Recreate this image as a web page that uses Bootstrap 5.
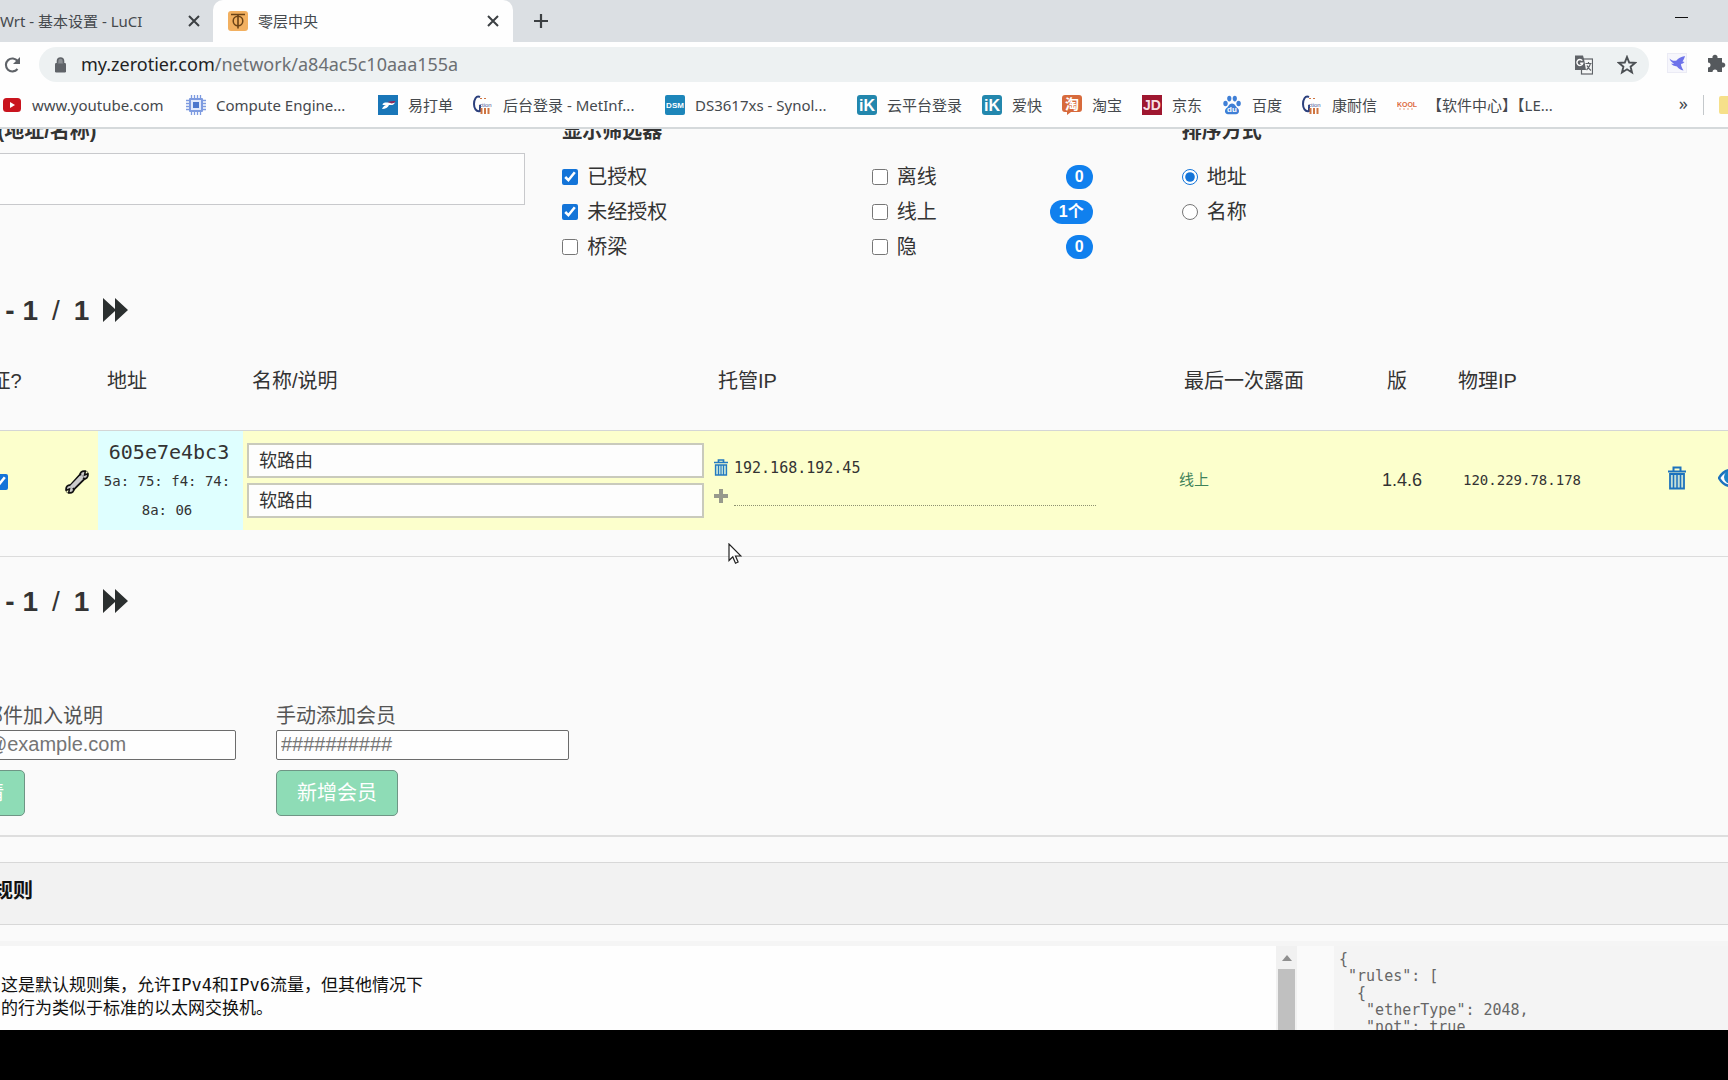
<!DOCTYPE html>
<html lang="zh-CN">
<head>
<meta charset="utf-8">
<meta name="viewport" content="width=device-width, initial-scale=1">
<title>零层中央</title>
<link rel="stylesheet" href="https://cdn.jsdelivr.net/npm/bootstrap@5.3.0/dist/css/bootstrap.min.css">
<style>
  body { font-family: "Liberation Sans", "Noto Sans CJK SC", sans-serif; font-size: 20px; line-height: 28px; color: #333; background: #fafafa; }
  button { color: inherit; }
  svg { display: block; flex: none; }
  .plain-btn { border: 0; background: none; padding: 0; }

  /* browser frame */
  .chrome-ui { font-family: "Noto Sans", "Noto Sans CJK SC", sans-serif; font-size: 15px; line-height: 20px; color: #45494d; background: #fefefe; border-bottom: 2px solid #d5d9db; }
  .tab-strip { height: 42px; background: #dbdfe3; }
  .tab-back { width: 213px; padding-right: 12px; }
  .tab-front { width: 300px; gap: 10px; padding: 0 13px 0 15px; background: #fefefe; border-radius: 10px 10px 0 0; }
  .toolbar { height: 45px; padding-top: 5px; }
  .omnibox { height: 35px; margin-left: 17px; padding: 0 12px 0 15px; border-radius: 18px; background: #edf1f2; }
  .omnibox-text { font-size: 18px; line-height: 24px; padding: 0 0 2px 14px; color: #6b6f73; }
  .omnibox-text b { font-weight: 400; color: #222; }
  .extensions { gap: 20px; padding: 0 2px 0 18px; }
  .bookmarks { height: 40px; padding: 0 0 4px 2px; gap: 20px; }
  .bookmarks a { color: #45494d; text-decoration: none; gap: 10px; }
  .bm-long { width: 134px; }
  .bm-more { gap: 15px; margin-right: -15px; font-size: 18px; }
  .bm-rule { width: 1px; height: 20px; background: #c4c8cb; }

  /* scrolled page */
  .viewport { min-height: 0; }
  .sheet { margin: -13px -73px 0 -57px; }
  .panel-title { font-size: 20px; line-height: 30px; font-weight: 700; margin: 0; }
  .search-col { padding-right: 37px; }
  .search-label { padding-left: 9px; }
  .search-box { height: 52px; margin-top: 7px; border: 1px solid #c8c9cc; background: #fdfdfd; padding: 0 12px; }
  .filters { padding-right: 89px; }
  .choices { padding: 13px 0 1px; }
  .choice { height: 35px; gap: 9px; }
  .choice input, .tick { width: 16px; height: 16px; margin: 0; accent-color: #1374d8; }
  .count { min-width: 27px; height: 24px; padding: 0 9px; border-radius: 12px; background: #1080ee; color: #fff; font-size: 16px; font-weight: 700; line-height: 24px; text-align: center; }
  .pager { height: 40px; padding-left: 39px; font-size: 28px; line-height: 40px; font-weight: 700; }
  .pager .slash { font-weight: 400; margin: 0 14px; }
  .pager button { margin-left: 14px; }
  .pager svg { margin-top: -3px; }

  .members { width: 100%; table-layout: fixed; margin-top: 1px; }
  .members th { height: 100px; padding: 2px 9px 0; font-weight: 400; border-bottom: 1px solid #d4d6d6; white-space: nowrap; }
  .members th:first-child { padding-right: 17px; }
  .members td { height: 100px; padding: 0 5px 0 4px; background: #fcffcc; }
  .members .addr-cell { background: #dfffff; padding: 3px 3px 0 0; }
  .mono { font-family: "DejaVu Sans Mono", monospace; }
  .addr { font-size: 20px; line-height: 29px; }
  .mac { font-size: 14px; line-height: 29px; padding: 0 9px 0 5px; }
  .name-box { height: 35px; border: 2px solid #c9cabc; background: #fdfdfd; padding: 0 10px 2px; font-size: 18px; color: #333; }
  .name-box + .name-box { margin-top: 5px; }
  .members .ip-cell { padding-top: 3px; }
  .ip-line { font-size: 15px; line-height: 20px; gap: 5px; }
  .ip-new { width: 362px; height: 20px; border: 0; border-bottom: 1px dotted #8d9170; background: none; }
  .seen { font-size: 15px; color: #3f8259; }
  .version { font-size: 18px; }
  .members .phys { font-size: 14px; padding-left: 14px; }
  .row-tools { padding: 0 0 4px 14px; gap: 32px; }
  .after-table { margin: 26px 0 25px; border: 0; border-top: 1px solid #dcdcdc; opacity: 1; }

  .add-row { margin-top: 80px; gap: 40px; }
  .add-form { width: 293px; color: #555; }
  .add-box { height: 30px; padding: 0 4px 2px; border: 1px solid #6c6c6c; border-radius: 2px; background: #fefefe; line-height: 24px; }
  .add-box::placeholder { color: #757575; opacity: 1; }
  .add-btn { height: 46px; margin-top: 10px; padding: 0 20px; border: 1px solid #6f9585; border-radius: 5px; background: #8edcb6; color: #fff; }
  .after-forms { margin: 19px 0 0; border: 0; border-top: 2px solid #dedede; opacity: 1; }
  .rules-head { height: 63px; margin-top: 25px; padding: 13px 10px; background: #f2f2f2; border: solid #d8d8d8; border-width: 1px 0; color: #111; }
  .rules-body { margin-top: 16px; height: 300px; border-top: 5px solid #f5f5f5; }
  .rule-editor { border: 0; resize: none; overflow: hidden; background: #fefefe; color: #111; font-size: 17px; line-height: 23px; padding: 28px 0 0 58px; font-family: "DejaVu Sans Mono", "Noto Sans CJK SC", monospace; }
  .bar { width: 21px; background: #f1f1f1; padding: 9px 2px 0; gap: 8px; }
  .bar i { background: #c0c0c0; }
  .rule-json { width: 467px; margin: 0 0 0 37px; padding: 5px; background: #f4f4f4; color: #666; font-size: 15px; line-height: 17px; overflow: hidden; }
  .letterbox { height: 50px; flex: none; background: #000; }
  .pointer { position: absolute; left: 728px; top: 543px; }
</style>
<script src="https://cdn.jsdelivr.net/npm/bootstrap@5.3.0/dist/js/bootstrap.bundle.min.js"></script>
</head>
<body class="vh-100 overflow-hidden d-flex flex-column">

<header class="chrome-ui flex-shrink-0">
  <div class="tab-strip d-flex align-items-center">
    <div class="tab-back d-flex align-items-center justify-content-between h-100 text-nowrap">
      <span>Wrt - 基本设置 - LuCI</span>
      <button class="plain-btn" aria-label="关闭"><svg width="14" height="14" viewBox="0 0 14 14"><path d="M2 2l10 10M12 2L2 12" stroke="#3c4043" stroke-width="2"/></svg></button>
    </div>
    <div class="tab-front d-flex align-items-center h-100">
      <svg width="20" height="20" viewBox="0 0 20 20"><rect width="20" height="20" rx="3" fill="#f2b060"/><path d="M3 3.500h14M10 3.500v14" stroke="#6b4316" stroke-width="1.600"/><circle cx="10" cy="10" r="4.800" fill="none" stroke="#6b4316" stroke-width="1.500"/></svg>
      <span class="flex-grow-1">零层中央</span>
      <button class="plain-btn" aria-label="关闭"><svg width="14" height="14" viewBox="0 0 14 14"><path d="M2 2l10 10M12 2L2 12" stroke="#3c4043" stroke-width="2"/></svg></button>
    </div>
    <button class="plain-btn ms-3 ps-1" aria-label="新标签页"><svg width="16" height="16" viewBox="0 0 16 16"><path d="M8 1v14M1 8h14" stroke="#3c4043" stroke-width="2.200"/></svg></button>
    <button class="plain-btn ms-auto me-4 pe-3 pb-1" aria-label="最小化"><svg width="13" height="10" viewBox="0 0 13 10"><path d="M0 3.500h13" stroke="#111"/></svg></button>
  </div>
  <div class="toolbar d-flex">
    <button class="plain-btn ms-1 pb-1" aria-label="重新加载"><svg width="18" height="18" viewBox="0 0 18 18"><path d="M13.500 13A6.500 6.500 0 1 1 13.600 5" fill="none" stroke="#5f6368" stroke-width="2.100"/><path d="M16 1v7H9z" fill="#5f6368"/></svg></button>
    <div class="omnibox d-flex align-items-center flex-grow-1">
      <svg width="13" height="16" viewBox="0 0 13 16"><rect x="1" y="6" width="11" height="9.500" rx="1.200" fill="#5f6368"/><path d="M3.500 6.500V4a3 3 0 0 1 6 0v2.500" fill="#8b8f93" stroke="#5f6368" stroke-width="1.600"/></svg>
      <span class="omnibox-text flex-grow-1"><b>my.zerotier.com</b>/network/a84ac5c10aaa155a</span>
      <svg class="me-4" width="19" height="20" viewBox="0 0 19 20"><rect x="7.500" y="4" width="11" height="15" fill="#f4f6f6" stroke="#5f6368" stroke-width="1.200"/><path d="M1 0.500h8l1 3.500 2 11H1z" fill="#5f6368"/><path d="M8.300 5.600a3 3 0 1 0 .5 2.700H6.200" fill="none" stroke="#fff" stroke-width="1.400"/><path d="M11.500 8.500h6M14.500 7v1.500M16.500 8.500c-.6 3-2.600 5-4 6.500M13 10.500c1 2 2.500 4 4 5" fill="none" stroke="#5f6368" stroke-width="1.200"/></svg>
      <svg width="20" height="20" viewBox="0 0 20 20"><path d="M10 2l2.200 5.500 5.900.4-4.500 3.800 1.400 5.800-5-3.200-5 3.200 1.400-5.800L1.900 7.900l5.900-.4z" fill="none" stroke="#4c5054" stroke-width="1.900"/></svg>
    </div>
    <div class="extensions d-flex align-items-center pb-2">
      <svg width="20" height="20" viewBox="0 0 20 20"><rect x=".5" y=".5" width="19" height="19" fill="#f6f6fc" stroke="#ebebf5"/><path d="M2.500 5.500c2 2 4.500 2.800 7 2C11 5 14 4 18 3c-.5 2-1.500 4-2.500 5.500l2 .5c-1 1.200-2.500 2-3.500 2 0 2 1 4 2.500 6.500-3-.5-5-2-6.500-4-3-.3-5-1.500-6-3 1.200.3 2 .3 3 0-2.500-1.200-4-3-4.500-5z" fill="#6d72ea"/></svg>
      <svg width="19" height="20" viewBox="0 0 19 20"><path d="M1 5h4.500a2.600 2.600 0 1 1 5 0H15v4.500a2.600 2.600 0 1 1 0 5V19h-4.500a2.500 2.500 0 0 0-5 0H1v-4.500a2.500 2.500 0 0 0 0-5z" fill="#55595d"/></svg>
    </div>
  </div>
  <nav class="bookmarks d-flex align-items-center text-nowrap overflow-hidden">
    <a class="d-flex align-items-center" href="#"><svg width="20" height="20" viewBox="0 0 20 20"><rect x="1" y="3" width="18" height="14" rx="3.500" fill="#c9141e"/><path d="M8 7l5 3-5 3z" fill="#fff"/></svg><span class="bm-long">www.youtube.com</span></a>
    <a class="d-flex align-items-center" href="#"><svg width="20" height="20" viewBox="0 0 20 20"><path d="M5.500 0v20M8.500 0v20M11.500 0v20M14.500 0v20M0 5.500h20M0 8.500h20M0 11.500h20M0 14.500h20" stroke="#7e9be0" stroke-width="1.300"/><rect x="3" y="3" width="14" height="14" rx="1" fill="#7e9be0"/><rect x="5" y="5" width="10" height="10" fill="#dfe8fb"/><rect x="7" y="7" width="6" height="6" fill="#4a76cc"/></svg><span class="bm-long">Compute Engine...</span></a>
    <a class="d-flex align-items-center ms-2" href="#"><svg width="20" height="20" viewBox="0 0 20 20"><rect width="20" height="20" fill="#1976b8"/><path d="M4 14c1-2 2-3.500 4-4H4.500c0-2 2-2.500 4-2.500H17c-1 2-2 2.500-4 2.500h-2c-1 2.500-3.500 4-7 4z" fill="#fff"/><path d="M9.500 7c2.500-1 5-1 8-1-.8 1.800-2 2.500-4 2.500z" fill="#8b2b5b"/></svg><span>易打单</span></a>
    <a class="d-flex align-items-center" href="#"><svg width="20" height="20" viewBox="0 0 20 20"><path d="M7 2C3 0 1 5 1 9s2 8 6 7V10" fill="none" stroke="#2b3f7c" stroke-width="2"/><text x="6" y="12" font-size="6" font-family="Liberation Sans" fill="#46599a">ction</text><path d="M8.500 13v6M12 13v6M15.500 13v6" stroke="#cf7440" stroke-width="2"/><path d="M7 3.500h2M11 3.500h2" stroke="#cf7440"/></svg><span class="bm-long">后台登录 - MetInf...</span></a>
    <a class="d-flex align-items-center ms-2" href="#"><svg width="20" height="20" viewBox="0 0 20 20"><rect width="20" height="20" rx="2" fill="#1d86ba"/><text x="10" y="13" text-anchor="middle" font-size="8" font-weight="700" font-family="Liberation Sans" fill="#fff">DSM</text></svg><span class="bm-long">DS3617xs - Synol...</span></a>
    <a class="d-flex align-items-center ms-2" href="#"><svg width="20" height="20" viewBox="0 0 20 20"><rect width="20" height="20" rx="3" fill="#2387ad"/><text x="10" y="16" text-anchor="middle" font-size="16" font-weight="700" font-family="Liberation Sans" fill="#fff">iK</text></svg><span>云平台登录</span></a>
    <a class="d-flex align-items-center" href="#"><svg width="20" height="20" viewBox="0 0 20 20"><rect width="20" height="20" rx="3" fill="#2387ad"/><text x="10" y="16" text-anchor="middle" font-size="16" font-weight="700" font-family="Liberation Sans" fill="#fff">iK</text></svg><span>爱快</span></a>
    <a class="d-flex align-items-center" href="#"><svg width="20" height="20" viewBox="0 0 20 20"><path d="M3 0h14a3 3 0 0 1 3 3v11a3 3 0 0 1-3 3H9l-4 3v-3H3a3 3 0 0 1-3-3V3a3 3 0 0 1 3-3z" fill="#d76a3c"/><text x="10" y="14" text-anchor="middle" font-size="14" font-weight="700" font-family="Noto Sans CJK SC" fill="#fff">淘</text></svg><span>淘宝</span></a>
    <a class="d-flex align-items-center" href="#"><svg width="20" height="20" viewBox="0 0 20 20"><rect width="20" height="20" fill="#9f1730"/><text x="10" y="15" text-anchor="middle" font-size="14" font-family="Liberation Sans" font-weight="700" fill="#f7dfe3">JD</text></svg><span>京东</span></a>
    <a class="d-flex align-items-center" href="#"><svg width="20" height="20" viewBox="0 0 20 20" fill="#3f7fd6"><ellipse cx="3.500" cy="8.500" rx="2.200" ry="2.800"/><ellipse cx="7.300" cy="3.600" rx="2.100" ry="2.800"/><ellipse cx="12.800" cy="3.600" rx="2.100" ry="2.800"/><ellipse cx="16.600" cy="8.500" rx="2.200" ry="2.800"/><path d="M10 8.500c3 0 3.500 3 5.500 4.500s2.500 6-1.500 6.200c-2 .1-6 .1-8 0-4-.2-3.500-4.700-1.500-6.200S7 8.500 10 8.500z"/><text x="10" y="17" text-anchor="middle" font-size="8" font-weight="700" font-family="Liberation Sans" fill="#fff">du</text></svg><span>百度</span></a>
    <a class="d-flex align-items-center" href="#"><svg width="20" height="20" viewBox="0 0 20 20"><path d="M7 2C3 0 1 5 1 9s2 8 6 7V10" fill="none" stroke="#2b3f7c" stroke-width="2"/><text x="6" y="12" font-size="6" font-family="Liberation Sans" fill="#46599a">ction</text><path d="M8.500 13v6M12 13v6M15.500 13v6" stroke="#cf7440" stroke-width="2"/><path d="M7 3.500h2M11 3.500h2" stroke="#cf7440"/></svg><span>康耐信</span></a>
    <a class="d-flex align-items-center" href="#"><svg width="20" height="20" viewBox="0 0 20 20"><text x="10" y="12" text-anchor="middle" font-size="7" font-weight="700" font-family="Liberation Sans" fill="#dd6a3e">KOOL</text><path d="M2 14h16" stroke="#e7a184" stroke-dasharray="2 2"/></svg><span>【软件中心】【LE...</span></a>
    <div class="bm-more d-flex align-items-center ms-auto">
      <span class="pb-1">»</span>
      <span class="bm-rule"></span>
      <svg width="24" height="20" viewBox="0 0 24 20"><path d="M0 3a2 2 0 0 1 2-2h7l2 1h13v17H2a2 2 0 0 1-2-2z" fill="#f6e08a"/></svg>
    </div>
  </nav>
</header>

<main class="viewport flex-grow-1 overflow-hidden">
  <div class="sheet">
    <div class="d-flex">
      <section class="search-col col-4">
        <label class="panel-title search-label d-block text-nowrap" for="q">搜索 (地址/名称)</label>
        <input id="q" class="search-box w-100 d-block" type="text">
      </section>
      <section class="filters col-4">
        <h2 class="panel-title">显示筛选器</h2>
        <div class="choices d-flex">
          <div class="flex-grow-1">
            <label class="choice d-flex align-items-center"><input type="checkbox" checked>已授权</label>
            <label class="choice d-flex align-items-center"><input type="checkbox" checked>未经授权</label>
            <label class="choice d-flex align-items-center"><input type="checkbox">桥梁</label>
          </div>
          <div class="col-5">
            <label class="choice d-flex align-items-center"><input type="checkbox">离线<span class="count ms-auto">0</span></label>
            <label class="choice d-flex align-items-center"><input type="checkbox">线上<span class="count ms-auto">1个</span></label>
            <label class="choice d-flex align-items-center"><input type="checkbox">隐<span class="count ms-auto">0</span></label>
          </div>
        </div>
      </section>
      <section class="col-4">
        <h2 class="panel-title">排序方式</h2>
        <div class="choices">
          <label class="choice d-flex align-items-center"><input type="radio" name="sort" checked>地址</label>
          <label class="choice d-flex align-items-center"><input type="radio" name="sort">名称</label>
        </div>
      </section>
    </div>

    <div class="pager d-flex align-items-center mt-4 pt-1">
      <span>1 - 1</span><span class="slash">/</span><span>1</span>
      <button class="plain-btn" aria-label="下一页"><svg width="25" height="24" viewBox="0 0 25 24"><path d="M0 0l12 11V0l13 12-13 12V13L0 24z" fill="#2b2f2f"/></svg></button>
    </div>

    <table class="members">
      <colgroup><col style="width:114px"><col style="width:41px"><col style="width:145px"><col><col><col style="width:203px"><col style="width:71px"><col style="width:201px"><col style="width:151px"></colgroup>
      <thead><tr><th class="text-center">认证?</th><th></th><th>地址</th><th>名称/说明</th><th>托管IP</th><th>最后一次露面</th><th>版</th><th>物理IP</th><th></th></tr></thead>
      <tbody><tr>
        <td class="text-center"><input class="tick align-middle" type="checkbox" checked aria-label="认证"></td>
        <td><svg class="mx-auto mt-1" width="24" height="24" viewBox="0 0 24 24"><g stroke="#111" stroke-width="1.800"><circle cx="19" cy="5" r="3.900" fill="#ccc"/><circle cx="5" cy="19" r="3.900" fill="#ccc"/><path d="M5.500 15L15 4.500 19.500 9 9 19.500z" fill="#ccc"/></g><path d="M6 17.500L17.500 6" stroke="#ccc" stroke-width="3.600"/><path d="M23.500 3.500L19.500 5l1-4.500" fill="#fcffcc" stroke="#111" stroke-width="1.500"/><path d="M.5 20.500L4.500 19l-1 4.500" fill="#fcffcc" stroke="#111" stroke-width="1.500"/></svg></td>
        <td class="addr-cell text-center mono"><div class="addr">605e7e4bc3</div><div class="mac">5a: 75: f4: 74: 8a: 06</div></td>
        <td><input class="name-box w-100 d-block" type="text" value="软路由" aria-label="名称"><input class="name-box w-100 d-block" type="text" value="软路由" aria-label="说明"></td>
        <td class="ip-cell">
          <div class="ip-line mono d-flex align-items-center"><button class="plain-btn" aria-label="删除"><svg width="16" height="17" viewBox="0 0 16 17"><path d="M1 3.500h14M5.500 3V1h5v2" fill="none" stroke="#247ac0" stroke-width="1.700"/><path d="M2.500 6h11v10h-11z" fill="#b9dcd9" stroke="#247ac0" stroke-width="1.300"/><path d="M5.500 6v10M8 6v10M10.500 6v10" stroke="#247ac0"/></svg></button><span>192.168.192.45</span></div>
          <div class="ip-line d-flex mt-2"><button class="plain-btn" aria-label="添加"><svg width="16" height="16" viewBox="0 0 16 16"><path d="M8 1v14M1 8h14" stroke="#97998c" stroke-width="4"/></svg></button><input class="ip-new" type="text" aria-label="新IP"></div>
        </td>
        <td class="seen">线上</td>
        <td class="version">1.4.6</td>
        <td class="phys mono">120.229.78.178</td>
        <td><div class="row-tools d-flex align-items-center">
          <button class="plain-btn" aria-label="删除"><svg width="18" height="24" viewBox="0 0 18 24"><path d="M0 5.500h18M5.500 5V1.500h7V5" fill="none" stroke="#1c72bd" stroke-width="2"/><path d="M2 8h14v14.500H2z" fill="#c5dfd6" stroke="#1c72bd" stroke-width="1.800"/><path d="M5.500 8v14M9 8v14M12.500 8v14" stroke="#1c72bd" stroke-width="1.500"/></svg></button>
          <button class="plain-btn" aria-label="隐藏"><svg width="26" height="18" viewBox="0 0 26 18"><path d="M1 9C5 2 9 1 13 1s8 1 12 8c-4 7-8 8-12 8S5 16 1 9z" fill="#fff" stroke="#1c72bd" stroke-width="2.500"/><circle cx="13" cy="8" r="7" fill="#1c82c8"/></svg></button>
        </div></td>
      </tr></tbody>
    </table>
    <hr class="after-table">

    <div class="pager d-flex align-items-center">
      <span>1 - 1</span><span class="slash">/</span><span>1</span>
      <button class="plain-btn" aria-label="下一页"><svg width="25" height="24" viewBox="0 0 25 24"><path d="M0 0l12 11V0l13 12-13 12V13L0 24z" fill="#2b2f2f"/></svg></button>
    </div>

    <div class="add-row d-flex">
      <form class="add-form"><label class="d-block" for="mail">通过邮件加入说明</label><input id="mail" class="add-box w-100 d-block" type="text" placeholder="user@example.com"><button class="add-btn" type="button">邀请</button></form>
      <form class="add-form"><label class="d-block" for="member">手动添加会员</label><input id="member" class="add-box w-100 d-block" type="text" placeholder="##########"><button class="add-btn" type="button">新增会员</button></form>
    </div>
    <hr class="after-forms">

    <h2 class="panel-title rules-head">流量规则</h2>
    <div class="rules-body d-flex">
      <textarea class="rule-editor flex-grow-1" aria-label="流量规则" spellcheck="false" readonly>
这是默认规则集，允许IPv4和IPv6流量，但其他情况下
的行为类似于标准的以太网交换机。</textarea>
      <div class="bar d-flex flex-column"><svg class="mx-auto" width="10" height="6" viewBox="0 0 10 6"><path d="M0 6l5-6 5 6z" fill="#8f8f8f"/></svg><i class="flex-grow-1"></i></div>
      <pre class="rule-json mono">{
 "rules": [
  {
   "etherType": 2048,
   "not": true</pre>
    </div>
  </div>
</main>
<div class="letterbox"></div>
<svg class="pointer" width="14" height="22" viewBox="0 0 14 22"><path d="M1 1v16.500l3.800-3.600 2.700 6.300 2.600-1.200-2.600-6H13z" fill="#fff" stroke="#222" stroke-width="1.200"/></svg>
</body>
</html>
